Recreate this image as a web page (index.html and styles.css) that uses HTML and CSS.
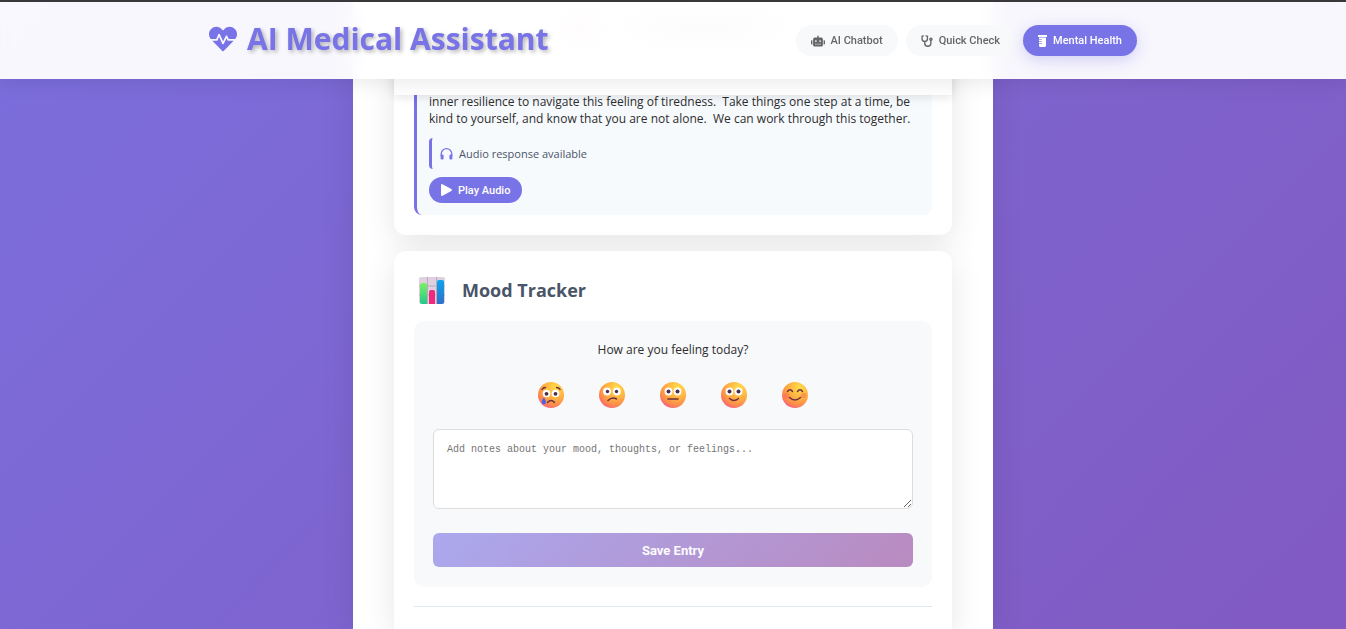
FILE: index.html
```html
<!DOCTYPE html>
<html lang="en">
<head>
  <meta charset="UTF-8">
  <meta name="viewport" content="width=device-width, initial-scale=1.0">
  <title>AI Medical Assistant</title>
  <link rel="stylesheet" href="styles.css">
</head>
<body>
  <!-- shared emoji shading -->
  <svg class="defs" width="0" height="0" aria-hidden="true">
    <defs>
      <radialGradient id="face" cx="0.68" cy="0.22" r="0.85">
        <stop offset="0" stop-color="#ffdc4c"/>
        <stop offset="0.5" stop-color="#ffb040"/>
        <stop offset="0.8" stop-color="#fd8a4c"/>
        <stop offset="1" stop-color="#f8607c"/>
      </radialGradient>
      <linearGradient id="barGreen" x1="0" y1="0" x2="0" y2="1">
        <stop offset="0" stop-color="#7df063"/>
        <stop offset="1" stop-color="#22c98b"/>
      </linearGradient>
      <linearGradient id="barBlue" x1="0" y1="0" x2="0" y2="1">
        <stop offset="0" stop-color="#0aa5ee"/>
        <stop offset="1" stop-color="#2f6fc9"/>
      </linearGradient>
    </defs>
  </svg>

  <header class="header">
    <div class="header-content">
      <h1 class="logo">
        <svg class="logo-icon" viewBox="0 0 512 512" aria-hidden="true">
          <path fill="currentColor" d="M320.200 243.800l-49.700 99.400c-6 12.100-23.400 11.700-28.900-.6l-56.900-126.300-30 71.700H60.600l182.500 186.500c7.100 7.300 18.600 7.300 25.700 0L451.400 288H342.300l-22.100-44.200zM473.700 73.900l-2.400-2.500c-51.500-52.600-135.800-52.600-187.400 0L256 100l-27.900-28.500c-51.500-52.700-135.900-52.700-187.400 0l-2.400 2.400C-10.400 123.700-12.500 203 31 256h102.400l35.900-86.200c5.400-12.900 23.600-13.100 29.400-.4l58.200 129.300 49-97.900c5.900-11.800 22.700-11.800 28.600 0l27.600 55.200H481c43.500-53 41.400-132.300-7.300-182.100z"/>
        </svg>
        AI Medical Assistant
      </h1>
      <nav class="nav">
        <button class="nav-btn">
          <svg width="14" height="12" viewBox="0 0 640 512" aria-hidden="true"><path fill="currentColor" d="M32 224H64V416H32A32 32 0 0 1 0 384V256A32 32 0 0 1 32 224ZM544 176V448A64 64 0 0 1 480 512H160A64 64 0 0 1 96 448V176A80 80 0 0 1 176 96H288V32a32 32 0 0 1 64 0V96H464A80 80 0 0 1 544 176ZM264 256a40 40 0 1 0-40 40A40 40 0 0 0 264 256ZM256 384H192v32h64ZM352 384H288v32h64ZM456 256a40 40 0 1 0-40 40A40 40 0 0 0 456 256ZM448 384H384v32h64ZM640 256V384a32 32 0 0 1-32 32H576V224h32A32 32 0 0 1 640 256Z"/></svg>
          AI Chatbot
        </button>
        <button class="nav-btn">
          <svg width="12" height="12" viewBox="0 0 512 512" fill="none" stroke="currentColor" stroke-width="58" stroke-linecap="round" aria-hidden="true"><path d="M105 35 45 50V160a115 115 0 0 0 230 0V50L215 35M160 275V350a115 115 0 0 0 260 0V225"/><circle cx="424" cy="180" r="46"/></svg>
          Quick Check
        </button>
        <button class="nav-btn active">
          <svg width="9" height="12" viewBox="0 0 9 12" aria-hidden="true"><path fill="currentColor" d="M0 0h9v2H0zM1 2h7v8.500a1.500 1.500 0 0 1-1.500 1.500h-4A1.500 1.500 0 0 1 1 10.500z"/><path stroke="#7873e6" stroke-width="0.600" d="M1 4.500h3M1 6.500h3M1 8.500h3M1 2.400h7"/></svg>
          Mental Health
        </button>
      </nav>
    </div>
  </header>

  <main class="container">
    <section class="card chat">
      <div class="chat-top"></div>
      <div class="chat-body">
        <div class="message">
          <p>inner resilience to navigate this feeling of tiredness.&nbsp; Take things one step at a time, be kind to yourself, and know that you are not alone.&nbsp; We can work through this together.</p>
          <div class="audio-note">
            <svg width="13" height="12" viewBox="0 0 13 12" aria-hidden="true"><path fill="none" stroke="currentColor" stroke-width="1.300" d="M1.200 8V6a5.300 5.300 0 0 1 10.600 0v2"/><rect x="0.600" y="6.500" width="3" height="5" rx="1.200" fill="currentColor"/><rect x="9.400" y="6.500" width="3" height="5" rx="1.200" fill="currentColor"/></svg>
            <span>Audio response available</span>
          </div>
          <button class="play-btn">
            <svg width="11" height="12" viewBox="0 0 11 12" aria-hidden="true"><path fill="currentColor" d="M0 1.200Q0-.4 1.500.3L10.300 5.100Q11.500 6 10.300 6.900L1.500 11.700Q0 12.400 0 10.800z"/></svg>
            Play Audio
          </button>
        </div>
      </div>
    </section>

    <section class="card mood">
      <h2 class="mood-title">
        <svg width="26" height="27" viewBox="0 0 26 27" aria-hidden="true">
          <rect x="0" y="0" width="26" height="27" rx="2" fill="#ddd0df"/>
          <path d="M0 9h26M0 18h26M8.500 0v27M17.500 0v27" stroke="#b9aabd" stroke-width="1"/>
          <path d="M1 8q0-2 2-2h3q2 0 2 2v19H3q-2 0-2-2z" fill="url(#barGreen)"/>
          <path d="M10 15q0-2 2-2h2q2 0 2 2v12h-6z" fill="#f5277d"/>
          <path d="M18 5q0-2 2-2h3q2 0 2 2v20q0 2-2 2h-5z" fill="url(#barBlue)"/>
        </svg>
        Mood Tracker
      </h2>

      <form class="mood-entry">
        <p class="question">How are you feeling today?</p>
        <div class="mood-options">
          <button type="button" class="mood-btn" aria-label="Very sad">
            <svg viewBox="0 0 26 26"><circle cx="13" cy="13" r="13" fill="url(#face)"/><g fill="#fff"><circle cx="8.500" cy="11.500" r="3.800"/><circle cx="17.500" cy="11.500" r="3.800"/></g><g fill="#4b2e4d"><circle cx="8.500" cy="11.800" r="1.900"/><circle cx="17.500" cy="11.800" r="1.900"/></g><path d="M4 7.500Q5 5.500 7.500 5.500M18.500 5.500Q21 5.500 22 7.500M9.500 20.500Q13 16.500 16.500 20.500" fill="none" stroke="#6b3140" stroke-width="1.400" stroke-linecap="round"/><path d="M5.800 15.500Q9 20 7.500 21.500Q5.800 23 4.200 21.500Q2.800 19.500 5.800 15.500z" fill="#4b5fe8"/></svg>
          </button>
          <button type="button" class="mood-btn" aria-label="Sad">
            <svg viewBox="0 0 26 26"><circle cx="13" cy="13" r="13" fill="url(#face)"/><g fill="#fff"><circle cx="8" cy="9.500" r="3.900"/><circle cx="17.800" cy="9.500" r="3.900"/></g><g fill="#4b2e4d"><circle cx="8.500" cy="9.500" r="1.700"/><circle cx="17.500" cy="9.500" r="1.700"/></g><path d="M9 18.500Q13 14.500 17.500 17" fill="none" stroke="#6b3140" stroke-width="1.500" stroke-linecap="round"/></svg>
          </button>
          <button type="button" class="mood-btn" aria-label="Neutral">
            <svg viewBox="0 0 26 26"><circle cx="13" cy="13" r="13" fill="url(#face)"/><g fill="#fff"><circle cx="8.500" cy="9.500" r="3.900"/><circle cx="17.500" cy="9.500" r="3.900"/></g><g fill="#4b2e4d"><circle cx="8.500" cy="9.500" r="2"/><circle cx="17.500" cy="9.500" r="2"/></g><path d="M8 17h10" stroke="#6b3140" stroke-width="1.500" stroke-linecap="round"/></svg>
          </button>
          <button type="button" class="mood-btn" aria-label="Good">
            <svg viewBox="0 0 26 26"><circle cx="13" cy="13" r="13" fill="url(#face)"/><g fill="#fff"><circle cx="8.500" cy="9.500" r="3.900"/><circle cx="17.500" cy="9.500" r="3.900"/></g><g fill="#4b2e4d"><circle cx="8.500" cy="9.500" r="2"/><circle cx="17.500" cy="9.500" r="2"/></g><path d="M8.500 16.500Q13 20.500 17.500 16.500" fill="none" stroke="#6b3140" stroke-width="1.500" stroke-linecap="round"/></svg>
          </button>
          <button type="button" class="mood-btn" aria-label="Great">
            <svg viewBox="0 0 26 26"><circle cx="13" cy="13" r="13" fill="url(#face)"/><g fill="#f95f5f" opacity="0.400"><circle cx="4.500" cy="13.500" r="2.800"/><circle cx="21.500" cy="13.500" r="2.800"/></g><path d="M5.500 9.500Q8 6 10.500 9.500M15.500 9.500Q18 6 20.500 9.500M7.500 15.500Q13 20.500 18.500 15.500" fill="none" stroke="#6b3140" stroke-width="1.500" stroke-linecap="round"/></svg>
          </button>
        </div>
        <textarea class="mood-notes" aria-label="Mood notes" placeholder="Add notes about your mood, thoughts, or feelings..."></textarea>
        <button type="submit" class="save-btn" disabled>Save Entry</button>
      </form>
      <hr class="divider">
    </section>
  </main>
</body>
</html>
```
FILE: styles.css
```css
:root {
  --primary: #7873e6;
  --text: #2d2d2d;
  --heading: #4a5568;
  --soft: #f8f9fb;
}

* {
  box-sizing: border-box;
  margin: 0;
  padding: 0;
}

body {
  display: flex;
  flex-direction: column;
  min-height: 100vh;
  border-top: 2px solid #3c3a3d;
  background: linear-gradient(135deg, #7b6edc 0%, #815ac2 100%);
  color: var(--text);
  font-family: "Open Sans", sans-serif;
}

.defs {
  position: absolute;
}

button {
  border: none;
  cursor: pointer;
  font-family: Roboto, "Liberation Sans", sans-serif;
}

/* Header */
.header {
  position: fixed;
  top: 2px;
  left: 0;
  right: 0;
  z-index: 10;
  background:
    radial-gradient(circle 28px at calc(50% - 91px) 25px, rgba(255, 90, 120, 0.02), transparent),
    radial-gradient(ellipse 100px 28px at calc(50% + 30px) 25px, rgba(74, 85, 140, 0.02), transparent),
    rgba(255, 255, 255, 0.95);
  backdrop-filter: blur(10px);
  box-shadow: 0 2px 20px rgba(0, 0, 0, 0.1);
}

.header-content {
  display: flex;
  justify-content: space-between;
  align-items: center;
  max-width: 928px;
  height: 77px;
  margin: 0 auto;
}

.logo {
  display: flex;
  align-items: center;
  gap: 10px;
  margin-bottom: 4px;
  color: var(--primary);
  font-size: 30px;
  line-height: 40px;
  text-shadow: 2px 2px 4px rgba(0, 0, 0, 0.3);
}

.logo-icon {
  width: 28px;
  height: 28px;
}

.nav {
  display: flex;
  gap: 8px;
}

.nav-btn {
  display: flex;
  align-items: center;
  gap: 6px;
  height: 31px;
  padding: 0 15px;
  border-radius: 20px;
  background: var(--soft);
  color: #666;
  font-size: 11px;
  font-weight: 500;
}

.nav-btn.active {
  background: var(--primary);
  color: #fff;
  box-shadow: 0 4px 15px rgba(120, 115, 230, 0.3);
}

/* Page column */
.container {
  display: flex;
  flex: 1;
  flex-direction: column;
  gap: 16px;
  width: 100%;
  max-width: 640px;
  margin: 0 auto;
  padding: 0 41px;
  background: #fff;
  box-shadow: 0 0 30px rgba(0, 0, 0, 0.1);
}

.card {
  border-radius: 12px;
  background: #fff;
  box-shadow: 0 8px 32px rgba(0, 0, 0, 0.1);
}

.chat-top {
  position: relative;
  height: 93px;
  background: #fff;
  box-shadow: 0 2px 10px rgba(0, 0, 0, 0.1);
}

.chat-body {
  padding: 0 20px 20px;
}

.message {
  padding: 0 12px 12px;
  border-left: 3px solid var(--primary);
  border-radius: 0 0 8px 8px;
  background: #f7fafd;
  font-size: 12px;
  line-height: 17px;
}

.message p {
  margin-top: -2px;
}

.audio-note {
  display: flex;
  align-items: center;
  gap: 6px;
  height: 31px;
  margin: 11px 0 8px;
  padding-left: 8px;
  border-left: 3px solid var(--primary);
  border-radius: 4px;
  color: var(--primary);
  font-size: 11px;
}

.audio-note span {
  color: var(--heading);
}

.play-btn {
  display: flex;
  align-items: center;
  gap: 6px;
  height: 26px;
  padding: 0 12px;
  border-radius: 15px;
  background: var(--primary);
  color: #fff;
  font-size: 11px;
  font-weight: 500;
}

/* Mood tracker */
.mood {
  flex: 1;
  padding: 20px 20px 22px;
  border-radius: 12px 12px 0 0;
}

.mood-title {
  display: flex;
  align-items: center;
  gap: 17px;
  height: 38px;
  margin-bottom: 12px;
  padding-left: 5px;
  color: var(--heading);
  font-size: 18px;
}

.mood-entry {
  padding: 19px 19px 20px;
  border-radius: 10px;
  background: var(--soft);
}

.question {
  font-size: 12px;
  line-height: 20px;
  text-align: center;
}

.mood-options {
  display: flex;
  justify-content: center;
  gap: 16px;
  margin: 12px 0 11px;
}

.mood-btn {
  display: grid;
  place-items: center;
  width: 45px;
  height: 46px;
  background: none;
}

.mood-btn svg {
  width: 26px;
  height: 26px;
}

.mood-notes {
  display: block;
  width: 100%;
  height: 80px;
  margin-bottom: 24px;
  padding: 13px;
  border: 1px solid #ddd;
  border-radius: 6px;
  font-family: "Liberation Mono", monospace;
  font-size: 10px;
  line-height: 13px;
  resize: vertical;
}

.save-btn {
  width: 100%;
  height: 34px;
  border-radius: 6px;
  background: linear-gradient(135deg, #7873e6, #8f4199);
  color: #fff;
  font-size: 13px;
  font-weight: bold;
  opacity: 0.6;
}

.divider {
  margin-top: 19px;
  border: none;
  border-top: 1px solid #e2e8f0;
}
```
